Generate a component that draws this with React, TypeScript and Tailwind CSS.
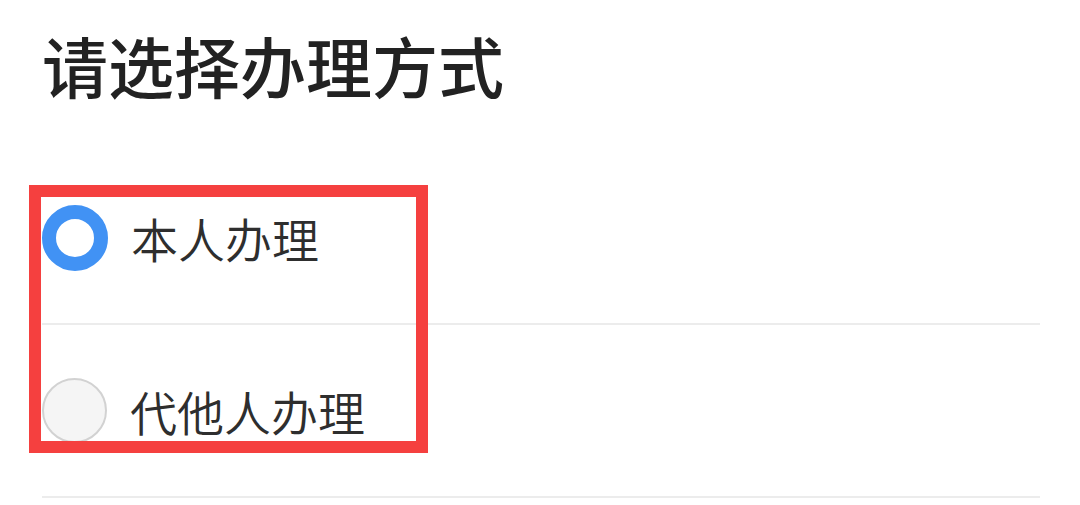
const options = [
  { id: "self", label: "本人办理", checked: true },
  { id: "agent", label: "代他人办理", checked: false },
];

export default function App() {
  return (
    <div className="relative h-[505px] w-[1080px] overflow-hidden bg-white font-['Noto_Sans_CJK_SC',sans-serif]">
      <div className="pl-[42px] pr-[40px]">
        <h1 className="pt-[31px] text-[66px] font-medium leading-none text-[#222222]">请选择办理方式</h1>

        <div className="mt-[55px]">
          {options.map((opt) => (
            <div key={opt.id} className="flex h-[173px] items-center border-b-2 border-[#ececec]">
              {opt.checked ? (
                <span className="h-[66px] w-[66px] shrink-0 rounded-full border-[14px] border-[#4192f4] bg-white" />
              ) : (
                <span className="h-[65px] w-[65px] shrink-0 rounded-full border-2 border-[#d2d2d2] bg-[#f5f5f5]" />
              )}
              <span className="ml-[23px] text-[47px] font-[350] leading-none text-[#2e2e2e]">{opt.label}</span>
            </div>
          ))}
        </div>
      </div>

      {/* annotation box */}
      <div className="absolute left-[29px] top-[185px] h-[268px] w-[399px] border-[12px] border-[#f5403f]" />
    </div>
  );
}
